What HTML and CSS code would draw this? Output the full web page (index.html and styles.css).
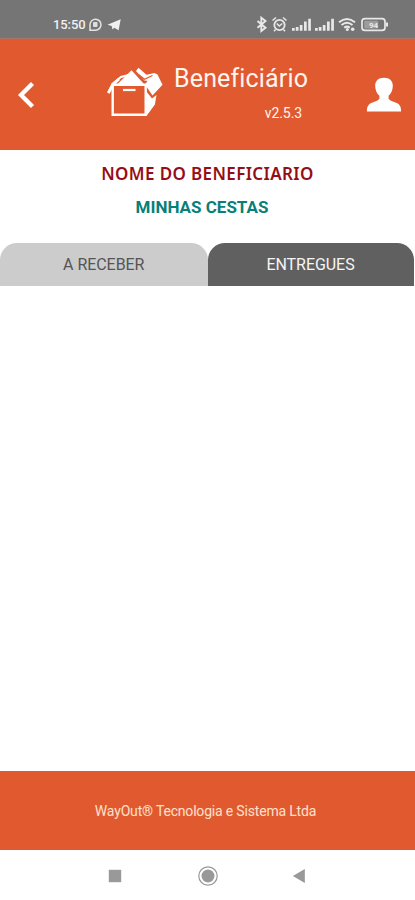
FILE: index.html
```html
<!DOCTYPE html>
<html lang="pt-BR">
<head>
<meta charset="utf-8">
<meta name="viewport" content="width=device-width, initial-scale=1">
<title>Beneficiário</title>
<link rel="stylesheet" href="styles.css">
</head>
<body>
<div class="screen">
  <div class="status">
    <span class="clock">15:50</span>
    <svg class="status-left" width="36" height="16" viewBox="88 16 36 16">
      <path d="M90 30.200V24.500a5.500 5.500 0 1 1 5.500 5.700Z" fill="none" stroke="#e4e4e4" stroke-width="1.500"/>
      <rect x="93" y="22" width="4.500" height="5" rx="1" fill="#dedede"/>
      <path d="M107.500 24.700 120.700 19.200 118.600 30.300 114.300 27.800 112.500 29.500 111.700 26Z" fill="#f0f0f0"/>
    </svg>
    <svg class="status-right" width="136" height="20" viewBox="254 14 136 20">
      <g fill="none" stroke="#e8e8e8" stroke-width="1.900">
        <path d="m257.500 21 8 6.800-4.200 3.200V17.700l4.200 3.300-8 6.800"/>
        <circle cx="279.500" cy="25" r="5.200" stroke-width="1.800"/>
        <path d="m276.700 23.500 2.600 2.500 3-2.500M272.500 20.500l3.500-3M286.500 20.500l-3.500-3M275.500 29.500l-1.500 1.700M283.500 29.500l1.500 1.700" stroke-width="1.500"/>
        <path d="M339 22.200q8-6.500 16 0M341.500 25q5.500-4.500 11 0M344.300 27.700q2.700-2.200 5.500 0" stroke-width="2"/>
        <rect x="362" y="18.700" width="23" height="11.700" rx="3" stroke-width="1.700"/>
      </g>
      <g fill="#e8e8e8">
        <path d="M292 28h2.700v2.700H292zM295.800 27h2.700v3.700h-2.700zM299.800 25h2.700v5.700h-2.700zM304 21.500h2.700v9.200H304zM308.200 18.700h2.700v12h-2.700z"/>
        <path d="M315 28h2.700v2.700H315zM318.800 27h2.700v3.700h-2.700zM322.800 25h2.700v5.700h-2.700zM327 21.500h2.700v9.200H327zM331.200 18.700h2.700v12h-2.700z"/>
        <circle cx="347.300" cy="29.500" r="1.500"/><circle cx="352.700" cy="29.300" r="1.800"/>
        <rect x="364.200" y="20.700" width="14" height="7.800" rx="1" opacity=".35"/>
        <path d="M386 22.500h2v4h-2z"/>
        <text class="battery" x="373.500" y="28.100" text-anchor="middle">94</text>
      </g>
    </svg>
  </div>

  <header class="header">
    <svg class="back" width="18" height="28" viewBox="18 81 18 28">
      <path d="M32.500 83.500 21 95l11.500 11.500" fill="none" stroke="#fff" stroke-width="4.300"/>
    </svg>
    <svg class="box" width="58" height="52" viewBox="106 67 58 52">
      <path d="M108.300 93 112.500 84 121 77 128.500 75" fill="none" stroke="#fff" stroke-width="2"/>
      <path d="M108.300 93 113 84.500 119 79" fill="none" stroke="#fff" stroke-width="2.800"/>
      <g fill="#fff">
        <path d="M117.500 84 131.500 70.200 144 84Z"/>
        <path d="M138.500 67.800 146.500 74.800 154.500 73 157.500 74.500 162.500 84.800 152.500 95.500 145 84.500 147.500 81 144.500 80.500 136 71Z"/>
        <path d="m146 91 6 7.500 4.500-3.500-1.600 9.500L146.500 116Z"/>
      </g>
      <path d="m138.500 74.500 6 4.800 8-3.800" fill="none" stroke="#e15a2f" stroke-width="1.200"/>
      <path d="M112.700 84.700h33v30h-33Z" fill="#e15a2f" stroke="#fff" stroke-width="2.400"/>
      <path d="M123 90h12.500" stroke="#fff" stroke-width="2.200"/>
    </svg>
    <div class="brand">
      <h1>Beneficiário</h1>
      <span class="version">v2.5.3</span>
    </div>
    <svg class="user" width="36" height="36" viewBox="366 77 36 36">
      <path d="M384 77.700c5.700 0 9 3.200 8.800 8.500-.1 4-1.700 7.300-4.200 9.500v3.100c1.500 2.200 5 2.900 8 4.200 3.500 1.500 4.500 4 4.500 8.500h-34.200c0-4.500 1-7 4.500-8.500 3-1.300 6.500-2 8-4.200v-3.100c-2.500-2.200-4.100-5.500-4.200-9.500-.2-5.300 3.100-8.500 8.800-8.500Z" fill="#fff"/>
    </svg>
  </header>

  <main class="content">
    <h2 class="name">NOME DO BENEFICIARIO</h2>
    <h3 class="baskets">MINHAS CESTAS</h3>
    <nav class="tabs">
      <div class="tab tab-receive"><span>A RECEBER</span></div>
      <div class="tab tab-delivered"><span>ENTREGUES</span></div>
    </nav>
  </main>

  <footer class="footer"><span>WayOut® Tecnologia e Sistema Ltda</span></footer>

  <div class="navbar">
    <svg width="14" height="14" viewBox="0 0 14 14"><path d="M.8.800h12.400v12.400H.8z" fill="#999"/></svg>
    <svg width="22" height="22" viewBox="0 0 22 22"><circle cx="11" cy="11" r="9.200" fill="none" stroke="#999" stroke-width="1.200"/><circle cx="11" cy="11" r="6.500" fill="#999"/></svg>
    <svg width="14" height="16" viewBox="0 0 14 16"><path d="M.8 8 12.800 1v14Z" fill="#999"/></svg>
  </div>
</div>
</body>
</html>
```
FILE: styles.css
```css
* { box-sizing: border-box; }
body { margin: 0; background: #fff; font-family: Roboto, "Liberation Sans", sans-serif; }
h1, h2, h3 { margin: 0; white-space: nowrap; }
svg { display: block; flex: none; }

.screen { width: 415px; height: 900px; display: flex; flex-direction: column; background: #fff; }

.status { height: 39px; display: flex; align-items: flex-start; background: #757575; border-bottom: 1px solid #a67569; color: #f0f0f0; }
.clock { width: 35px; margin: 17px 0 0 53px; font-size: 13px; line-height: 16px; font-weight: 500; letter-spacing: -.1px; white-space: nowrap; }
.status-left { margin-top: 16px; }
.status-right { margin: 14px 0 0 130px; }
.battery { font: 700 8px Roboto, sans-serif; }

.header { height: 111px; display: flex; align-items: flex-start; background: #e15a2f; color: #fff5ed; }
.back { margin: 42px 0 0 18px; }
.box { margin: 28px 0 0 70px; }
.brand { width: 134px; margin: 24px 0 0 10px; display: flex; flex-direction: column; }
.brand h1 { font-size: 25px; line-height: 32px; font-weight: 400; letter-spacing: .15px; }
.version { margin: 10px 6px 0 0; align-self: flex-end; font-size: 14px; line-height: 16px; letter-spacing: -.1px; }
.user { margin: 38px 0 0 58px; }

.content { flex: 1; display: flex; flex-direction: column; align-items: center; }
.name { margin-top: 12px; font: 600 17px/24px "Noto Sans", sans-serif; letter-spacing: .37px; color: #960e14; }
.baskets { margin: 11px 11px 0 0; font-size: 17px; line-height: 20px; font-weight: 700; color: #087f78; }
.tabs { width: 415px; margin-top: 25.5px; padding-right: 1.500px; display: grid; grid-template-columns: 207.5px 1fr; background: #fff; }
.tab { height: 43px; display: flex; align-items: center; justify-content: center; border-radius: 17px 17px 0 0; font-size: 16px; letter-spacing: -.05px; }
.tab-receive { background: #ccc; color: #555; }
.tab-delivered { background: #606060; color: #f5f5f5; }

.footer { height: 79px; display: flex; align-items: center; justify-content: center; background: #e15a2f; color: #ffe0cc; font-size: 14px; letter-spacing: -.18px; }
.footer span { margin-right: 4px; }
.navbar { height: 50px; padding: 1px 2px 0 0; display: flex; align-items: center; justify-content: center; gap: 82px; }
.navbar svg:first-child { margin-right: -7px; }
.navbar svg:last-child { margin-left: -9px; }
```
